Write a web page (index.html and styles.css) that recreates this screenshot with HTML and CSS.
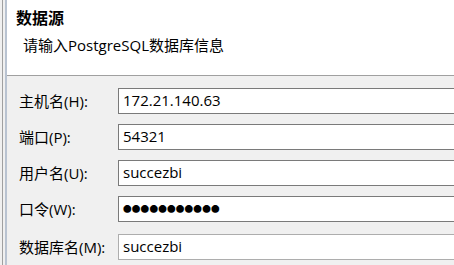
FILE: index.html
```html
<!DOCTYPE html>
<html lang="zh-CN">
<head>
    <meta charset="UTF-8">
    <meta name="viewport" content="width=device-width, initial-scale=1.0">
    <title>数据源</title>
    <link rel="stylesheet" href="styles.css">
</head>
<body>

<div class="shell">
    <div class="panel">
        <header>
            <h1>数据源</h1>
            <p>请输入PostgreSQL数据库信息</p>
        </header>

        <div class="form">
            <label>主机名(H):</label>
            <div class="field">172.21.140.63</div>

            <label>端口(P):</label>
            <div class="field">54321</div>

            <label>用户名(U):</label>
            <div class="field">succezbi</div>

            <label>口令(W):</label>
            <div class="field password">●●●●●●●●●●●</div>

            <label class="last">数据库名(M):</label>
            <div class="field last light">succezbi</div>
        </div>
    </div>
</div>

</body>
</html>
```

FILE: styles.css
```css
html, body {
    margin: 0;
    padding: 0;
    height: 100%;
    overflow: hidden;
}
body {
    font-family: "Open Sans", "Noto Sans CJK SC", sans-serif;
    background-color: #f0f0f0;
    color: #000;
    padding-left: 2px;
}
.shell {
    height: 100%;
    border-left: 1px solid #a0a0a0;
    padding-left: 2px;
}
.panel {
    height: 100%;
    border-left: 2px solid #b9c3d1;
    background-color: #f0f0f0;
}
header {
    height: 76px;
    background-color: #fff;
    border-bottom: 1px solid #a0a0a0;
    box-sizing: border-box;
    padding: 6px 0 0 9px;
}
header h1 {
    margin: 0;
    font-family: "Noto Sans CJK SC", sans-serif;
    font-size: 16px;
    font-weight: bold;
    line-height: 22px;
}
header p {
    margin: 7px 0 0 7px;
    font-size: 15px;
    line-height: 20px;
}
.form {
    display: grid;
    grid-template-columns: 99px 1fr;
    row-gap: 10px;
    align-items: center;
    padding: 12px 0 0 12px;
}
.form label {
    font-size: 15px;
    line-height: 20px;
}
.field {
    height: 26px;
    box-sizing: border-box;
    border: 1px solid #7a7a7a;
    border-right: none;
    background-color: #fff;
    padding: 0 4px;
    font-size: 15px;
    line-height: 23px;
    white-space: nowrap;
    overflow: hidden;
}
.password {
    font-size: 8.6px;
    line-height: 24px;
    letter-spacing: 0.2px;
}
.last {
    margin-top: 2px;
}
.light {
    border-color: #adadad;
}
```
